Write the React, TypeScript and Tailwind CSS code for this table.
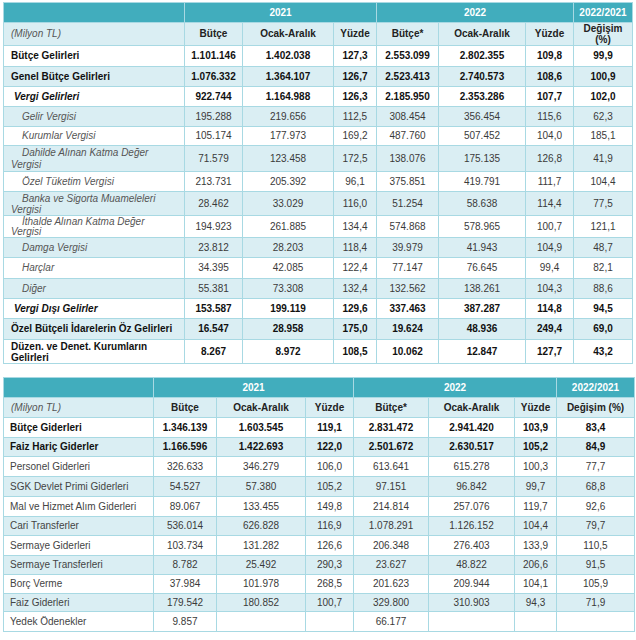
import React from 'react';

type Kind = 'b' | 'bi' | 'i' | 'n';

interface Row {
  label: React.ReactNode;
  v: string[];
  kind: Kind;
  h: string;
  lh?: string;
}

const gelirRows: Row[] = [
  { label: 'Bütçe Gelirleri', v: ['1.101.146', '1.402.038', '127,3', '2.553.099', '2.802.355', '109,8', '99,9'], kind: 'b', h: 'h-[21px]' },
  { label: 'Genel Bütçe Gelirleri', v: ['1.076.332', '1.364.107', '126,7', '2.523.413', '2.740.573', '108,6', '100,9'], kind: 'b', h: 'h-[20px]' },
  { label: 'Vergi Gelirleri', v: ['922.744', '1.164.988', '126,3', '2.185.950', '2.353.286', '107,7', '102,0'], kind: 'bi', h: 'h-[20px]' },
  { label: 'Gelir Vergisi', v: ['195.288', '219.656', '112,5', '308.454', '356.454', '115,6', '62,3'], kind: 'i', h: 'h-[20px]' },
  { label: 'Kurumlar Vergisi', v: ['105.174', '177.973', '169,2', '487.760', '507.452', '104,0', '185,1'], kind: 'i', h: 'h-[19px]' },
  { label: <>Dahilde Alınan Katma Değer<br />Vergisi</>, v: ['71.579', '123.458', '172,5', '138.076', '175.135', '126,8', '41,9'], kind: 'i', h: 'h-[26px]', lh: 'leading-[12px]' },
  { label: 'Özel Tüketim Vergisi', v: ['213.731', '205.392', '96,1', '375.851', '419.791', '111,7', '104,4'], kind: 'i', h: 'h-[20px]' },
  { label: <>Banka ve Sigorta Muameleleri<br />Vergisi</>, v: ['28.462', '33.029', '116,0', '51.254', '58.638', '114,4', '77,5'], kind: 'i', h: 'h-[24px]', lh: 'leading-[11px]' },
  { label: <>İthalde Alınan Katma Değer<br />Vergisi</>, v: ['194.923', '261.885', '134,4', '574.868', '578.965', '100,7', '121,1'], kind: 'i', h: 'h-[22px]', lh: 'leading-[10px]' },
  { label: 'Damga Vergisi', v: ['23.812', '28.203', '118,4', '39.979', '41.943', '104,9', '48,7'], kind: 'i', h: 'h-[20px]' },
  { label: 'Harçlar', v: ['34.395', '42.085', '122,4', '77.147', '76.645', '99,4', '82,1'], kind: 'i', h: 'h-[21px]' },
  { label: 'Diğer', v: ['55.381', '73.308', '132,4', '132.562', '138.261', '104,3', '88,6'], kind: 'i', h: 'h-[20px]' },
  { label: 'Vergi Dışı Gelirler', v: ['153.587', '199.119', '129,6', '337.463', '387.287', '114,8', '94,5'], kind: 'bi', h: 'h-[20px]' },
  { label: 'Özel Bütçeli İdarelerin Öz Gelirleri', v: ['16.547', '28.958', '175,0', '19.624', '48.936', '249,4', '69,0'], kind: 'b', h: 'h-[21px]' },
  { label: <>Düzen. ve Denet. Kurumların<br />Gelirleri</>, v: ['8.267', '8.972', '108,5', '10.062', '12.847', '127,7', '43,2'], kind: 'b', h: 'h-[24px]', lh: 'leading-[11px]' },
];

const giderRows: Row[] = [
  { label: 'Bütçe Giderleri', v: ['1.346.139', '1.603.545', '119,1', '2.831.472', '2.941.420', '103,9', '83,4'], kind: 'b', h: 'h-[20px]' },
  { label: 'Faiz Hariç Giderler', v: ['1.166.596', '1.422.693', '122,0', '2.501.672', '2.630.517', '105,2', '84,9'], kind: 'b', h: 'h-[19px]' },
  { label: 'Personel Giderleri', v: ['326.633', '346.279', '106,0', '613.641', '615.278', '100,3', '77,7'], kind: 'n', h: 'h-[20px]' },
  { label: 'SGK Devlet Primi Giderleri', v: ['54.527', '57.380', '105,2', '97.151', '96.842', '99,7', '68,8'], kind: 'n', h: 'h-[20px]' },
  { label: 'Mal ve Hizmet Alım Giderleri', v: ['89.067', '133.455', '149,8', '214.814', '257.076', '119,7', '92,6'], kind: 'n', h: 'h-[20px]' },
  { label: 'Cari Transferler', v: ['536.014', '626.828', '116,9', '1.078.291', '1.126.152', '104,4', '79,7'], kind: 'n', h: 'h-[19px]' },
  { label: 'Sermaye Giderleri', v: ['103.734', '131.282', '126,6', '206.348', '276.403', '133,9', '110,5'], kind: 'n', h: 'h-[20px]' },
  { label: 'Sermaye Transferleri', v: ['8.782', '25.492', '290,3', '23.627', '48.822', '206,6', '91,5'], kind: 'n', h: 'h-[19px]' },
  { label: 'Borç Verme', v: ['37.984', '101.978', '268,5', '201.623', '209.944', '104,1', '105,9'], kind: 'n', h: 'h-[19px]' },
  { label: 'Faiz Giderleri', v: ['179.542', '180.852', '100,7', '329.800', '310.903', '94,3', '71,9'], kind: 'n', h: 'h-[18px]' },
  { label: 'Yedek Ödenekler', v: ['9.857', '', '', '66.177', '', '', ''], kind: 'n', h: 'h-[20px]' },
];

const cell = 'border border-[#a8d9e3] p-0';

const labelStyle: Record<Kind, string> = {
  b: 'font-bold text-[#111]',
  bi: 'font-bold italic text-[#111] indent-[3px]',
  i: 'italic text-[#555] indent-[11px]',
  n: 'text-[#444]',
};

function BodyRows({ rows, pad }: { rows: Row[]; pad: string }) {
  return (
    <>
      {rows.map((r, i) => {
        const bold = r.kind === 'b' || r.kind === 'bi';
        return (
          <tr key={i} className={`${r.h} ${i % 2 === 1 ? 'bg-[#daeef3]' : 'bg-white'}`}>
            <td className={`${cell} ${pad} ${r.lh ?? 'leading-[12px]'} ${labelStyle[r.kind]}`}>{r.label}</td>
            {r.v.map((x, j) => (
              <td key={j} className={`${cell} text-center ${bold ? 'font-bold text-[#111]' : 'text-[#3a3a3a]'}`}>
                {x}
              </td>
            ))}
          </tr>
        );
      })}
    </>
  );
}

function Head({ label, cols, last }: { label: string; cols: string[]; last: React.ReactNode }) {
  return (
    <>
      <tr className="h-[20px] bg-[#41adbd] text-white font-bold">
        <td className={cell}></td>
        <td className={`${cell} text-center`} colSpan={3}>2021</td>
        <td className={`${cell} text-center`} colSpan={3}>2022</td>
        <td className={`${cell} text-center`}>2022/2021</td>
      </tr>
      <tr className={`${label} bg-[#daeef3]`}>
        <td className={`${cell} pl-[7px] italic text-[#555]`}>(Milyon TL)</td>
        {cols.map((c, i) => (
          <td key={i} className={`${cell} text-center font-bold text-[#222]`}>{c}</td>
        ))}
        <td className={`${cell} text-center font-bold text-[#222] leading-[11px]`}>{last}</td>
      </tr>
    </>
  );
}

const heads = ['Bütçe', 'Ocak-Aralık', 'Yüzde', 'Bütçe*', 'Ocak-Aralık', 'Yüzde'];

export default function App() {
  return (
    <div className="w-[636px] h-[640px] bg-white overflow-hidden text-[10px] leading-[12px] font-['Liberation_Sans',Arial,sans-serif]">
      <table className="ml-[3px] mt-[2px] w-[629px] table-fixed border-collapse">
        <colgroup>
          <col className="w-[181px]" />
          <col className="w-[58px]" />
          <col className="w-[91px]" />
          <col className="w-[43px]" />
          <col className="w-[62px]" />
          <col className="w-[87px]" />
          <col className="w-[48px]" />
          <col className="w-[59px]" />
        </colgroup>
        <tbody>
          <Head label="h-[23px]" cols={heads} last={<>Değişim<br />(%)</>} />
          <BodyRows rows={gelirRows} pad="pl-[7px]" />
        </tbody>
      </table>

      <table className="ml-[3px] mt-[13px] w-[631px] table-fixed border-collapse">
        <colgroup>
          <col className="w-[150px]" />
          <col className="w-[63px]" />
          <col className="w-[89px]" />
          <col className="w-[48px]" />
          <col className="w-[75px]" />
          <col className="w-[86px]" />
          <col className="w-[42px]" />
          <col className="w-[78px]" />
        </colgroup>
        <tbody>
          <Head label="h-[20px]" cols={heads} last="Değişim (%)" />
          <BodyRows rows={giderRows} pad="pl-[6px]" />
        </tbody>
      </table>
    </div>
  );
}
